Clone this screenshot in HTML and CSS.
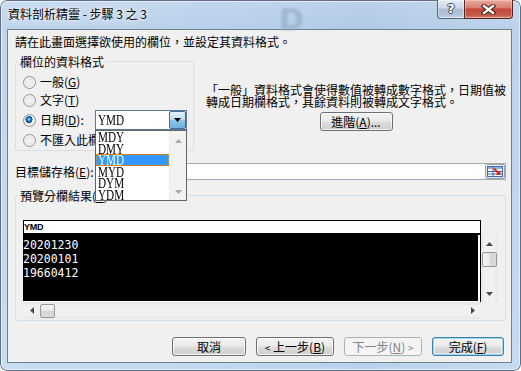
FILE: index.html
```html
<!DOCTYPE html>
<html lang="zh-Hant">
<head>
<meta charset="utf-8">
<title>資料剖析精靈 - 步驟 3 之 3</title>
<link rel="stylesheet" href="styles.css">
</head>
<body>
<div class="window">
  <div class="titlebar">
    <span class="title">資料剖析精靈 - 步驟 3 之 3</span>
    <span class="ghost">D</span>
    <div class="caps">
      <div class="cap help"><span class="qmark">?</span></div>
      <div class="cap close">
        <svg width="15" height="11" viewBox="0 0 15 11">
          <path d="M3 2 L12 9 M12 2 L3 9" stroke="#3a1812" stroke-width="4.4" stroke-linecap="square" fill="none"/>
          <path d="M3 2 L12 9 M12 2 L3 9" stroke="#ffffff" stroke-width="2.4" stroke-linecap="square" fill="none"/>
        </svg>
      </div>
    </div>
  </div>

  <div class="client">
    <p class="intro">請在此畫面選擇欲使用的欄位，並設定其資料格式。</p>

    <div class="top-row">
      <fieldset class="group fmt">
        <legend>欄位的資料格式</legend>
        <div class="gbody fmt-body">
          <div class="opt"><span class="radio"></span><span class="lbl">一般(<u>G</u>)</span></div>
          <div class="opt"><span class="radio"></span><span class="lbl">文字(<u>T</u>)</span></div>
          <div class="opt date">
            <span class="radio on"></span><span class="lbl">日期(<u>D</u>):</span>
            <div class="combo">
              <span class="combo-val"><span class="serif">YMD</span></span>
              <span class="combo-btn">
                <svg width="7" height="4" viewBox="0 0 7 4"><path d="M0 0 H7 L3.5 4 Z" fill="#000"/></svg>
              </span>
              <div class="droplist">
                <div class="items">
                  <div class="item"><span class="serif">MDY</span></div>
                  <div class="item"><span class="serif">DMY</span></div>
                  <div class="item sel"><span class="serif">YMD</span></div>
                  <div class="item"><span class="serif">MYD</span></div>
                  <div class="item"><span class="serif">DYM</span></div>
                  <div class="item"><span class="serif">YDM</span></div>
                </div>
                <div class="list-scroll">
                  <svg width="7" height="4" viewBox="0 0 7 4"><path d="M0 4 H7 L3.5 0 Z" fill="#a9a9a9"/></svg>
                  <svg width="7" height="4" viewBox="0 0 7 4"><path d="M0 0 H7 L3.5 4 Z" fill="#a9a9a9"/></svg>
                </div>
              </div>
            </div>
          </div>
          <div class="opt"><span class="radio"></span><span class="lbl">不匯入此欄(略過)(<u>I</u>)</span></div>
        </div>
      </fieldset>

      <div class="note">
        <p class="note-text">「一般」資料格式會使得數值被轉成數字格式，日期值被<br>轉成日期欄格式，其餘資料則被轉成文字格式。</p>
        <button class="btn adv">進階(<u>A</u>)...</button>
      </div>
    </div>

    <div class="dest-row">
      <span class="dest-label">目標儲存格(<u>E</u>):</span>
      <div class="dest-input">
        <span class="picker">
          <svg width="18" height="13" viewBox="0 0 18 13">
            <rect x="1.5" y="1.5" width="15" height="10" fill="#ffffff" stroke="#3d6db3"/>
            <rect x="2" y="2" width="14" height="2" fill="#8fb1e0"/>
            <path d="M2 6.5 H16 M2 9 H16 M7 2 V11.5" stroke="#3d6db3" stroke-width="1"/>
            <path d="M8 3.5 L13 8.5" stroke="#e0261b" stroke-width="2"/>
            <path d="M14.5 10 L9.5 9.8 L14.3 5.2 Z" fill="#e0261b"/>
          </svg>
        </span>
      </div>
    </div>

    <fieldset class="group preview">
      <legend>預覽分欄結果(<u>P</u>)</legend>
      <div class="gbody prev-body">
        <div class="grid">
          <div class="ghead">YMD</div>
          <div class="gdata">
            <div>20201230</div>
            <div>20200101</div>
            <div>19660412</div>
          </div>
          <div class="vscroll">
            <span class="sbtn"><svg width="7" height="4" viewBox="0 0 7 4"><path d="M0 4 H7 L3.5 0 Z" fill="#4a4a4a"/></svg></span>
            <span class="thumb vthumb"></span>
            <span class="sfill"></span>
            <span class="sbtn"><svg width="7" height="4" viewBox="0 0 7 4"><path d="M0 0 H7 L3.5 4 Z" fill="#4a4a4a"/></svg></span>
          </div>
          <div class="hscroll">
            <span class="sbtn"><svg width="4" height="7" viewBox="0 0 4 7"><path d="M4 0 V7 L0 3.5 Z" fill="#4a4a4a"/></svg></span>
            <span class="thumb hthumb"></span>
            <span class="sfill"></span>
            <span class="sbtn"><svg width="4" height="7" viewBox="0 0 4 7"><path d="M0 0 V7 L4 3.5 Z" fill="#4a4a4a"/></svg></span>
          </div>
        </div>
      </div>
    </fieldset>

    <div class="buttons">
      <button class="btn b-cancel">取消</button>
      <button class="btn b-back"><span class="chev">&lt;</span> 上一步(<u>B</u>)</button>
      <button class="btn b-next disabled">下一步(<u>N</u>) <span class="chev">&gt;</span></button>
      <button class="btn b-finish default">完成(<u>F</u>)</button>
    </div>
  </div>
</div>
</body>
</html>
```

FILE: styles.css
```css
* { box-sizing: border-box; }

html, body {
  margin: 0;
  padding: 0;
}

body {
  width: 521px;
  height: 371px;
  overflow: hidden;
  background: #ffffff;
  font-family: "Noto Sans CJK TC", "Noto Sans CJK SC", sans-serif;
  font-size: 12px;
  color: #000;
}

u { text-decoration: underline; text-underline-offset: 1px; }

/* ---------- window frame ---------- */
.window {
  position: relative;
  width: 521px;
  height: 371px;
  border-radius: 7px;
  background:
    linear-gradient(90deg, rgba(255,255,255,0.10) 0, rgba(255,255,255,0) 40%, rgba(120,150,185,0.10) 70%, rgba(255,255,255,0.05) 100%),
    linear-gradient(180deg, #c3d8ee 0, #b9d0ea 29px, #c2d9f1 100%);
  box-shadow: inset 0 0 0 1px #5f7086, inset 0 0 0 2px rgba(255,255,255,0.55);
  display: flex;
  flex-direction: column;
  overflow: hidden;
}

.titlebar {
  position: relative;
  height: 29px;
  flex: none;
  display: flex;
  align-items: flex-start;
  padding-left: 8px;
}

.title {
  margin-top: 7px;
  line-height: 14px;
  white-space: nowrap;
  text-shadow: 0 0 6px #ffffff, 0 0 3px rgba(255,255,255,0.9);
  position: relative;
  z-index: 1;
}

.ghost {
  position: absolute;
  left: 279px;
  top: 2px;
  font: bold 30px "DejaVu Sans", sans-serif;
  color: #8ea5bf;
  opacity: 0.6;
  filter: blur(1.6px);
}

.caps {
  margin-left: auto;
  margin-right: 8px;
  display: flex;
}

.cap {
  height: 19px;
  display: flex;
  align-items: center;
  justify-content: center;
}

.help {
  width: 27px;
  border: 1px solid #56667c;
  border-top: none;
  border-right: none;
  border-radius: 0 0 0 4px;
  background: linear-gradient(180deg, #e4ecf5 0, #ccd8e6 45%, #a9bcd1 50%, #b4c6da 85%, #c9d8e8 100%);
  box-shadow: inset 0 0 0 1px rgba(255,255,255,0.45);
}

.qmark {
  font: bold 13px/13px "DejaVu Sans", sans-serif;
  color: #ffffff;
  text-shadow: 1px 0 0 #34455c, -1px 0 0 #34455c, 0 1px 0 #34455c, 0 -1px 0 #34455c;
  margin-top: -1px;
}

.close {
  width: 49px;
  border: 1px solid #5a2520;
  border-top: none;
  border-radius: 0 0 4px 0;
  background: linear-gradient(180deg, #e9aa9f 0, #d98070 42%, #c4483a 50%, #c65a49 85%, #d98a76 100%);
  box-shadow: inset 0 0 0 1px rgba(255,220,210,0.45);
}

/* ---------- client ---------- */
.client {
  margin: 0 9px 8px 7px;
  height: 334px;
  flex: none;
  background: #f0f0f0;
  border: 1px solid #6f7f92;
  display: flex;
  flex-direction: column;
}

.intro {
  margin: 5px 0 0 7px;
  line-height: 14px;
  white-space: nowrap;
}

.top-row {
  margin-top: 5px;
  display: flex;
  align-items: flex-start;
}

/* group boxes */
.group {
  margin: 0;
  padding: 0;
  min-width: 0;
  border: 1px solid #d5dfe5;
  border-radius: 3px;
}

.group legend {
  margin-left: 2px;
  padding: 0 2px;
  line-height: 15px;
  white-space: nowrap;
}

.fmt {
  margin-left: 7px;
  width: 179px;
  flex: none;
}

.fmt-body {
  padding: 4px 6px 1px 7px;
}

.opt {
  display: flex;
  align-items: center;
  height: 18px;
  white-space: nowrap;
}

.opt.date {
  height: 20px;
  margin-top: 1px;
}

.opt.date + .opt { margin-top: 1px; }

.lbl { line-height: 14px; }

.radio {
  width: 13px;
  height: 13px;
  flex: none;
  margin-right: 4px;
  border-radius: 50%;
  border: 1px solid #8e8f8f;
  background: radial-gradient(circle at 50% 50%, #f4f4f4 0, #e6e6e6 55%, #d2d2d2 100%);
  box-shadow: inset 0 0 0 1px rgba(255,255,255,0.8);
}

.radio.on {
  background:
    radial-gradient(circle at 45% 40%, #a9e4ff 0, #3a9ee0 1.3px, #1466ad 2.4px, #0b3f78 3.4px, transparent 3.7px),
    radial-gradient(circle at 50% 50%, #f4f4f4 0, #e6e6e6 55%, #d2d2d2 100%);
}

/* combobox + dropped list */
.combo {
  position: relative;
  margin-left: auto;
  width: 92px;
  height: 20px;
  border: 1px solid #5f7894;
  background: #ffffff;
  display: flex;
  align-items: center;
}

.serif {
  display: inline-block;
  font-family: "Liberation Serif", serif;
  font-size: 14px;
  line-height: 11.5px;
  transform: scaleX(0.8);
  transform-origin: left center;
}

.combo-val {
  padding-left: 2px;
  line-height: 18px;
}

.combo-btn {
  margin-left: auto;
  width: 17px;
  height: 18px;
  border: 1px solid #3c6f9a;
  border-radius: 2px;
  background: linear-gradient(180deg, #e2f2fb 0, #bde0f5 45%, #8fc7ea 50%, #6fb0dc 100%);
  display: flex;
  align-items: center;
  justify-content: center;
}

.droplist {
  position: absolute;
  left: -1px;
  top: 19px;
  width: 92px;
  height: 71px;
  border: 1px solid #646464;
  background: #ffffff;
  display: flex;
  z-index: 10;
}

.items {
  width: 73px;
  flex: none;
}

.item {
  height: 11.5px;
  line-height: 11.5px;
  padding-left: 2px;
  white-space: nowrap;
}

.item.sel {
  background: #3399ff;
  color: #ffffff;
  outline: 1px dotted #e3902a;
  outline-offset: -1px;
}

.list-scroll {
  flex: 1;
  background: #f2f2f2;
  border-left: 1px solid #ececec;
  display: flex;
  flex-direction: column;
  align-items: center;
  justify-content: space-between;
  padding: 8px 0 6px;
}

/* right note */
.note {
  margin: 30px 0 0 12px;
  width: 300px;
  display: flex;
  flex-direction: column;
  align-items: center;
}

.note-text {
  margin: 0;
  align-self: stretch;
  line-height: 12px;
  white-space: nowrap;
}

/* buttons */
.btn {
  height: 19px;
  padding: 0;
  border: 1px solid #707070;
  border-radius: 3px;
  background: linear-gradient(180deg, #f2f2f2 0, #ebebeb 48%, #dddddd 52%, #cfcfcf 100%);
  box-shadow: inset 0 0 0 1px rgba(255,255,255,0.75);
  font-family: "Noto Sans CJK TC", "Noto Sans CJK SC", sans-serif;
  font-size: 12px;
  line-height: 15px;
  color: #000;
  white-space: nowrap;
}

.adv {
  margin-top: 4px;
  width: 73px;
}

.chev { font-size: 10px; }

.btn.disabled {
  border-color: #adb2b5;
  background: #f4f4f4;
  box-shadow: none;
  color: #838383;
}

.btn.default {
  border-color: #3c7fb1;
  box-shadow: inset 0 0 0 1px #9fd6f3, inset 0 0 0 2px rgba(255,255,255,0.5);
}

/* destination row */
.dest-row {
  margin-top: 12px;
  height: 17px;
  display: flex;
  align-items: center;
}

.dest-label {
  margin-left: 7px;
  line-height: 14px;
  white-space: nowrap;
}

.dest-input {
  flex: 1;
  height: 17px;
  margin: 0 5px 0 4px;
  border: 1px solid #a3a9b1;
  background: #ffffff;
  display: flex;
  align-items: center;
}

.picker {
  margin-left: auto;
  width: 20px;
  height: 15px;
  border: 1px solid #9aa1aa;
  border-radius: 2px;
  background: linear-gradient(180deg, #f6f6f6, #e2e2e2);
  display: flex;
  align-items: center;
  justify-content: center;
}

/* preview */
.preview {
  margin: 8px 5px 0 7px;
}

.prev-body {
  padding: 17px 0 1px 7px;
}

.grid {
  display: grid;
  grid-template-columns: 458px 17px;
  grid-template-rows: 15px 67px 17px;
}

.ghead {
  grid-column: 1;
  grid-row: 1;
  border: 1px solid #000;
  border-bottom-width: 2px;
  background: #ffffff;
  font: bold 9px/12px "Liberation Sans", sans-serif;
  letter-spacing: -0.3px;
  padding-left: 0;
}

.gdata {
  grid-column: 1;
  grid-row: 2;
  background: #000;
  border-right: 1px solid #000;
  box-shadow: inset -2px 0 0 #ffffff, inset 0 -1px 0 #ffffff;
  color: #ffffff;
  font-family: "DejaVu Sans Mono", monospace;
  font-size: 11.5px;
  line-height: 14px;
  padding: 3px 0 0 0;
}

.vscroll {
  grid-column: 2;
  grid-row: 2;
  background: linear-gradient(90deg, #e6e6e6 0, #f1f1f1 25%, #f1f1f1 75%, #e8e8e8 100%);
  display: flex;
  flex-direction: column;
  align-items: center;
}

.hscroll {
  grid-column: 1;
  grid-row: 3;
  background: linear-gradient(180deg, #e6e6e6 0, #f1f1f1 25%, #f1f1f1 75%, #e8e8e8 100%);
  display: flex;
  align-items: center;
}

.sbtn {
  width: 17px;
  height: 17px;
  flex: none;
  display: flex;
  align-items: center;
  justify-content: center;
}

.sfill { flex: 1; }

.thumb {
  flex: none;
  border: 1px solid #979797;
  border-radius: 2px;
}

.vthumb {
  width: 15px;
  height: 15px;
  background: linear-gradient(90deg, #f4f4f4 0, #e8e8e8 50%, #d6d6d6 51%, #dcdcdc 100%);
}

.hthumb {
  width: 15px;
  height: 14px;
  background: linear-gradient(180deg, #f4f4f4 0, #e8e8e8 50%, #d6d6d6 51%, #dcdcdc 100%);
}

/* bottom buttons */
.buttons {
  margin-top: 16px;
  padding-right: 7px;
  display: flex;
  justify-content: flex-end;
  gap: 10px;
}

.b-cancel { width: 74px; }
.b-back { width: 78px; }
.b-next { width: 78px; }
.b-finish { width: 72px; }
```
